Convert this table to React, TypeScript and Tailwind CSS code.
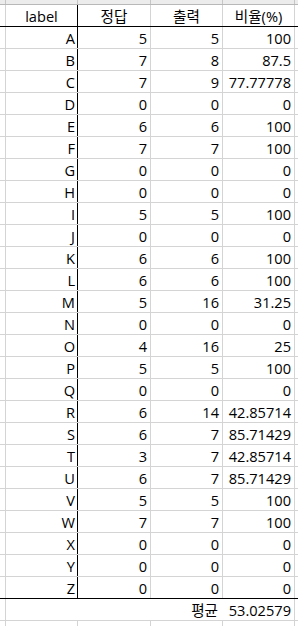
import React from 'react';

type Row = [string, number, number, string];

const rows: Row[] = [
  ['A', 5, 5, '100'],
  ['B', 7, 8, '87.5'],
  ['C', 7, 9, '77.77778'],
  ['D', 0, 0, '0'],
  ['E', 6, 6, '100'],
  ['F', 7, 7, '100'],
  ['G', 0, 0, '0'],
  ['H', 0, 0, '0'],
  ['I', 5, 5, '100'],
  ['J', 0, 0, '0'],
  ['K', 6, 6, '100'],
  ['L', 6, 6, '100'],
  ['M', 5, 16, '31.25'],
  ['N', 0, 0, '0'],
  ['O', 4, 16, '25'],
  ['P', 5, 5, '100'],
  ['Q', 0, 0, '0'],
  ['R', 6, 14, '42.85714'],
  ['S', 6, 7, '85.71429'],
  ['T', 3, 7, '42.85714'],
  ['U', 6, 7, '85.71429'],
  ['V', 5, 5, '100'],
  ['W', 7, 7, '100'],
  ['X', 0, 0, '0'],
  ['Y', 0, 0, '0'],
  ['Z', 0, 0, '0'],
];

const font = { fontFamily: '"Open Sans", "Noto Sans CJK KR", sans-serif' };

export default function App() {
  return (
    <div className="h-[626px] w-[298px] overflow-hidden bg-white text-[14.6px] leading-none text-black" style={font}>
      {/* column header strip, cut off at the top */}
      <div className="flex h-[5px] border-b border-[#b8b8b8] bg-[#ececec]">
        <div className="w-[6px] border-r border-[#c6c6c6]" />
        <div className="w-[72px] border-r border-[#c6c6c6]" />
        <div className="w-[73px] border-r border-[#c6c6c6]" />
        <div className="w-[72px] border-r border-[#c6c6c6]" />
        <div className="w-[72px] border-r border-[#c6c6c6]" />
        <div className="flex-1" />
      </div>

      <div className="flex h-[22px] border-b border-black">
        <div className="w-[6px] border-r border-[#d4d4d4]" />
        <div className="flex w-[72px] items-center justify-center border-r border-black pt-px">label</div>
        <div className="flex w-[73px] items-center justify-center border-r border-[#d4d4d4] pt-px">정답</div>
        <div className="flex w-[72px] items-center justify-center border-r border-[#d4d4d4] pt-px">출력</div>
        <div className="flex w-[72px] items-center justify-center border-r border-[#d4d4d4] pt-px">비율(%)</div>
        <div className="flex-1" />
      </div>

      {rows.map(([label, correct, output, ratio], i) => (
        <div
          key={label}
          className={
            i === rows.length - 1
              ? 'flex h-[22px] border-b border-black'
              : 'flex h-[22px] border-b border-[#d4d4d4]'
          }
        >
          <div className="w-[6px] border-r border-[#d4d4d4]" />
          <div className="flex w-[72px] items-center justify-end border-r border-black pr-[2px] pt-px">{label}</div>
          <div className="flex w-[73px] items-center justify-end border-r border-[#d4d4d4] pr-[3px] pt-px">{correct}</div>
          <div className="flex w-[72px] items-center justify-end border-r border-[#d4d4d4] pr-[3px] pt-px">{output}</div>
          <div className="flex w-[72px] items-center justify-end border-r border-[#d4d4d4] pr-[3px] pt-px">{ratio}</div>
          <div className="flex-1" />
        </div>
      ))}

      <div className="flex h-[22px] border-b border-[#d4d4d4]">
        <div className="w-[6px] border-r border-[#d4d4d4]" />
        <div className="w-[72px]" />
        <div className="w-[73px]" />
        <div className="flex w-[72px] items-center justify-end pr-[5px] pt-px">평균</div>
        <div className="flex w-[72px] items-center justify-end border-l border-white border-r border-r-[#d4d4d4] pr-[3px] pt-px">53.02579</div>
        <div className="flex-1" />
      </div>

      <div className="flex h-[5px]">
        <div className="w-[6px] border-r border-[#d4d4d4]" />
        <div className="w-[72px] border-r border-[#d4d4d4]" />
        <div className="w-[73px] border-r border-[#d4d4d4]" />
        <div className="w-[72px] border-r border-[#d4d4d4]" />
        <div className="w-[72px] border-r border-[#d4d4d4]" />
        <div className="flex-1" />
      </div>
    </div>
  );
}
